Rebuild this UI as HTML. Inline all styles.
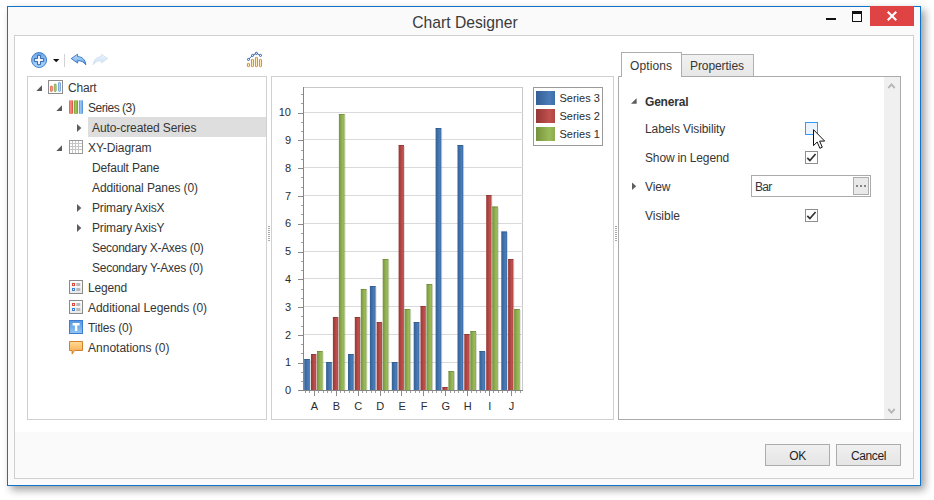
<!DOCTYPE html>
<html>
<head>
<meta charset="utf-8">
<title>Chart Designer</title>
<style>
html,body{margin:0;padding:0;}
body{width:934px;height:500px;background:#fff;position:relative;overflow:hidden;font-family:"Liberation Sans",sans-serif;font-size:12px;color:#333;}
.a{position:absolute;}
svg{position:absolute;overflow:visible;}
#win{position:absolute;left:7px;top:6px;width:912px;height:478px;border:1px solid #0f74c8;background:#fafafa;box-shadow:4px 4px 8px rgba(0,0,0,.38);}
#title{position:absolute;left:8px;top:13px;width:914px;text-align:center;font-size:15.7px;letter-spacing:0;line-height:20px;color:#3b3b3b;}
#frame{position:absolute;left:14px;top:35px;width:898px;height:442px;border:1px solid #d0d0d0;background:#fff;}
#footer{position:absolute;left:15px;top:432px;width:898px;height:46px;background:#fafafa;}
.btn{position:absolute;top:444px;width:63px;height:20px;border:1px solid #acacac;background:linear-gradient(#f0f0f0,#e5e5e5);text-align:center;line-height:22px;font-size:12px;color:#1e1e1e;}
.panel{position:absolute;border:1px solid #d0d0d0;background:#fff;}
.t{position:absolute;white-space:nowrap;color:#363636;font-size:12px;letter-spacing:-0.15px;line-height:20px;height:20px;}
.cb{position:absolute;width:11px;height:11px;border:1px solid #8e8e8e;background:#fff;}
.ct{font-family:"Liberation Sans",sans-serif;font-size:11px;fill:#2c2c2c;}
</style>
</head>
<body>
<div id="win"></div>
<div id="title">Chart Designer</div>
<div class="a" style="left:826px;top:18px;width:10px;height:2px;background:#111;"></div>
<div class="a" style="left:852px;top:11px;width:8px;height:7px;border:1px solid #111;border-top:3px solid #111;"></div>
<div class="a" style="left:870px;top:6px;width:44px;height:20px;background:#e04343;"></div>
<svg class="a" style="left:870px;top:6px" width="44" height="20"><path d="M17.7 5.7 L26.3 14.3 M26.3 5.7 L17.7 14.3" stroke="#fff" stroke-width="2.1" fill="none"/></svg>
<div id="frame"></div>
<div id="footer"></div>
<div class="btn" style="left:765px;letter-spacing:-0.5px;">OK</div>
<div class="btn" style="left:836px;letter-spacing:-0.4px;">Cancel</div>
<div class="panel" style="left:27px;top:76px;width:238px;height:342px;"></div>
<div class="panel" style="left:271px;top:76px;width:341px;height:342px;"></div>
<div class="panel" style="left:618px;top:76px;width:281px;height:342px;border-color:#ababab;"></div>
<svg style="left:0;top:0" width="934" height="500">
<defs>
<linearGradient id="gPlus" x1="0" y1="0" x2="0" y2="1"><stop offset="0" stop-color="#6aa4e6"/><stop offset="1" stop-color="#aed8f7"/></linearGradient>
<linearGradient id="gUndo" x1="0" y1="0" x2="0" y2="1"><stop offset="0" stop-color="#c0e0f8"/><stop offset=".55" stop-color="#8cc0ee"/><stop offset="1" stop-color="#3f7fd0"/></linearGradient>
<linearGradient id="gRedo" x1="0" y1="0" x2="0" y2="1"><stop offset="0" stop-color="#edf5fc"/><stop offset="1" stop-color="#c9def2"/></linearGradient>
<linearGradient id="gOr" x1="0" y1="0" x2="1" y2="0"><stop offset="0" stop-color="#d58a35"/><stop offset=".5" stop-color="#fff0c0"/><stop offset="1" stop-color="#d58a35"/></linearGradient>
<linearGradient id="gT" x1="0" y1="0" x2="0" y2="1"><stop offset="0" stop-color="#5596e2"/><stop offset="1" stop-color="#93c6f3"/></linearGradient>
<linearGradient id="gAn" x1="0" y1="0" x2="0" y2="1"><stop offset="0" stop-color="#ffdc96"/><stop offset="1" stop-color="#f6a445"/></linearGradient>
<linearGradient id="gLg" x1="0" y1="0" x2="0" y2="1"><stop offset="0" stop-color="#ffffff"/><stop offset="1" stop-color="#e9e9e9"/></linearGradient>
<linearGradient id="gR" x1="0" y1="0" x2="1" y2="0"><stop offset="0" stop-color="#d8483a"/><stop offset=".45" stop-color="#f59a8a"/><stop offset="1" stop-color="#d8483a"/></linearGradient>
<linearGradient id="gG" x1="0" y1="0" x2="1" y2="0"><stop offset="0" stop-color="#6f9a2a"/><stop offset=".45" stop-color="#a9cc62"/><stop offset="1" stop-color="#6f9a2a"/></linearGradient>
<linearGradient id="gB" x1="0" y1="0" x2="1" y2="0"><stop offset="0" stop-color="#4a8ad8"/><stop offset=".45" stop-color="#a6cdf4"/><stop offset="1" stop-color="#4a8ad8"/></linearGradient>
<linearGradient id="bB" x1="0" y1="0" x2="1" y2="0"><stop offset="0" stop-color="#335f94"/><stop offset=".7" stop-color="#4a7cb8"/><stop offset="1" stop-color="#3f6fa8"/></linearGradient>
<linearGradient id="bR" x1="0" y1="0" x2="1" y2="0"><stop offset="0" stop-color="#953735"/><stop offset=".7" stop-color="#c0504d"/><stop offset="1" stop-color="#b04845"/></linearGradient>
<linearGradient id="bG" x1="0" y1="0" x2="1" y2="0"><stop offset="0" stop-color="#76923c"/><stop offset=".7" stop-color="#9bbb59"/><stop offset="1" stop-color="#8cac4e"/></linearGradient>
</defs>

<circle cx="39.1" cy="60" r="7.5" fill="url(#gPlus)" stroke="#4482d2" stroke-width="1"/>
<path d="M37.6 55.3 h2.8 v3.3 h3.3 v2.8 h-3.3 v3.3 h-2.8 v-3.3 h-3.3 v-2.8 h3.3 z" fill="#fff" stroke="#2b61ae" stroke-width="1"/>
<path d="M53 59 h6.4 l-3.2 3.3 z" fill="#111"/>
<rect x="64" y="54" width="1" height="13" fill="#d2d2d2"/>
<path transform="translate(71.2,54.2)" d="M0 4.4 L6.4 0 L6.4 2.4 C10.8 2.4 14.3 5.5 14.6 10.6 C12.8 7.8 10.2 6.5 6.4 6.5 L6.4 8.9 Z" fill="url(#gUndo)" stroke="#3673c6" stroke-width=".9" stroke-linejoin="round"/>
<path transform="translate(107.8,54.2) scale(-1,1)" d="M0 4.4 L6.4 0 L6.4 2.4 C10.8 2.4 14.3 5.5 14.6 10.6 C12.8 7.8 10.2 6.5 6.4 6.5 L6.4 8.9 Z" fill="url(#gRedo)" stroke="#cfe2f4" stroke-width=".8" stroke-linejoin="round"/>
<rect x="247.4" y="63.35" width="2.1" height="3.3" rx=".7" fill="url(#gOr)" stroke="#c87a2a" stroke-width=".7"/>
<rect x="251.4" y="59.35" width="2.1" height="7.3" rx=".7" fill="url(#gOr)" stroke="#c87a2a" stroke-width=".7"/>
<rect x="255.4" y="57.35" width="2.1" height="9.3" rx=".7" fill="url(#gOr)" stroke="#c87a2a" stroke-width=".7"/>
<rect x="259.4" y="59.35" width="2.1" height="7.3" rx=".7" fill="url(#gOr)" stroke="#c87a2a" stroke-width=".7"/>
<polyline points="248.5,59.4 252.6,55.4 256.4,53.3 260.5,55.4" fill="none" stroke="#2c5fa8" stroke-width=".9"/>
<circle cx="248.5" cy="59.4" r="1.05" fill="#fff" stroke="#1f58ac" stroke-width=".95"/>
<circle cx="252.6" cy="55.4" r="1.05" fill="#fff" stroke="#1f58ac" stroke-width=".95"/>
<circle cx="256.4" cy="53.3" r="1.05" fill="#fff" stroke="#1f58ac" stroke-width=".95"/>
<circle cx="260.5" cy="55.4" r="1.05" fill="#fff" stroke="#1f58ac" stroke-width=".95"/>
<path d="M42 85.3 L42 91 L36.3 91 Z" fill="#5a5a5a"/>
<path d="M62 105.3 L62 111 L56.3 111 Z" fill="#5a5a5a"/>
<path d="M62 145.3 L62 151 L56.3 151 Z" fill="#5a5a5a"/>
<path d="M77 124.1 L81.3 128.1 L77 132.1 Z" fill="#5e5e5e"/>
<path d="M77 204.1 L81.3 208.1 L77 212.1 Z" fill="#5e5e5e"/>
<path d="M77 224.1 L81.3 228.1 L77 232.1 Z" fill="#5e5e5e"/>
<rect x="48.5" y="80.5" width="14" height="13" fill="#fff" stroke="#8c8c8c"/>
<rect x="50.45" y="86.1" width="1.9" height="5.3" rx=".6" fill="#f6a292" stroke="#d8483a" stroke-width=".7"/>
<rect x="54.25" y="84.1" width="1.9" height="7.3" rx=".6" fill="#b4d670" stroke="#6c9a28" stroke-width=".7"/>
<rect x="58.55" y="82.4" width="1.9" height="9" rx=".6" fill="#b8daf8" stroke="#4a88d8" stroke-width=".7"/>
<rect x="69.1" y="100.2" width="3.9" height="13.7" rx=".8" fill="url(#gR)"/>
<rect x="73.9" y="100.2" width="4.1" height="13.7" rx=".8" fill="url(#gG)"/>
<rect x="78.9" y="100.2" width="4.1" height="13.7" rx=".8" fill="url(#gB)"/>
<rect x="69.5" y="140.5" width="13" height="13" fill="#fff" stroke="#9a9a9a"/>
<rect x="72" y="141" width="1" height="12" fill="#c6c6c6"/>
<rect x="70" y="143" width="12" height="1" fill="#c6c6c6"/>
<rect x="75" y="141" width="1" height="12" fill="#c6c6c6"/>
<rect x="70" y="146" width="12" height="1" fill="#c6c6c6"/>
<rect x="78" y="141" width="1" height="12" fill="#c6c6c6"/>
<rect x="70" y="149" width="12" height="1" fill="#c6c6c6"/>
<rect x="69.5" y="280.5" width="13" height="13" fill="url(#gLg)" stroke="#8a8a8a"/>
<rect x="72" y="283" width="3" height="3" fill="#d94a3c"/><rect x="73" y="284" width="1" height="1" fill="#fff"/>
<rect x="76.3" y="283" width="4" height="3" fill="#b9b9b9"/>
<rect x="72" y="288" width="3" height="3" fill="#3f7fd2"/><rect x="73" y="289" width="1" height="1" fill="#fff"/>
<rect x="76.3" y="288" width="4" height="3" fill="#b9b9b9"/>
<rect x="69.5" y="300.5" width="13" height="13" fill="url(#gLg)" stroke="#8a8a8a"/>
<rect x="72" y="303" width="3" height="3" fill="#d94a3c"/><rect x="73" y="304" width="1" height="1" fill="#fff"/>
<rect x="76.3" y="303" width="4" height="3" fill="#b9b9b9"/>
<rect x="72" y="308" width="3" height="3" fill="#3f7fd2"/><rect x="73" y="309" width="1" height="1" fill="#fff"/>
<rect x="76.3" y="308" width="4" height="3" fill="#b9b9b9"/>
<rect x="69.5" y="320.5" width="13" height="13" fill="url(#gT)" stroke="#3b7bd0"/>
<path d="M72.6 323.1 h7 v2.3 h-2.35 v5.5 h-2.3 v-5.5 h-2.35 z" fill="#fff"/>
<path d="M69.5 341.5 h13 v9 h-8 l-2.4 3.6 v-3.6 h-2.6 z" fill="url(#gAn)" stroke="#d2812f" stroke-linejoin="round"/>
</svg>
<div class="a" style="left:88px;top:117px;width:178px;height:20px;background:#dedede;"></div>
<div class="t" style="left:68px;top:78px;letter-spacing:-0.18px;">Chart</div>
<div class="t" style="left:88px;top:98px;letter-spacing:-0.47px;">Series (3)</div>
<div class="t" style="left:92px;top:118px;letter-spacing:-0.09px;">Auto-created Series</div>
<div class="t" style="left:88px;top:138px;letter-spacing:-0.08px;">XY-Diagram</div>
<div class="t" style="left:92px;top:158px;letter-spacing:-0.18px;">Default Pane</div>
<div class="t" style="left:92px;top:178px;letter-spacing:-0.105px;">Additional Panes (0)</div>
<div class="t" style="left:92px;top:198px;letter-spacing:-0.185px;">Primary AxisX</div>
<div class="t" style="left:92px;top:218px;letter-spacing:-0.185px;">Primary AxisY</div>
<div class="t" style="left:92px;top:238px;letter-spacing:-0.295px;">Secondary X-Axes (0)</div>
<div class="t" style="left:92px;top:258px;letter-spacing:-0.26px;">Secondary Y-Axes (0)</div>
<div class="t" style="left:88px;top:278px;letter-spacing:-0.17px;">Legend</div>
<div class="t" style="left:88px;top:298px;letter-spacing:-0.05px;">Additional Legends (0)</div>
<div class="t" style="left:88px;top:318px;letter-spacing:-0.2px;">Titles (0)</div>
<div class="t" style="left:88px;top:338px;letter-spacing:0.01px;">Annotations (0)</div>
<svg style="left:0;top:0" width="934" height="500">
<rect x="303.5" y="87.5" width="219" height="303" fill="#fff" stroke="#c9c9c9"/>
<rect x="304" y="362" width="219" height="1" fill="#dadada"/>
<rect x="304" y="334" width="219" height="1" fill="#dadada"/>
<rect x="304" y="306" width="219" height="1" fill="#dadada"/>
<rect x="304" y="278" width="219" height="1" fill="#dadada"/>
<rect x="304" y="251" width="219" height="1" fill="#dadada"/>
<rect x="304" y="223" width="219" height="1" fill="#dadada"/>
<rect x="304" y="195" width="219" height="1" fill="#dadada"/>
<rect x="304" y="167" width="219" height="1" fill="#dadada"/>
<rect x="304" y="139" width="219" height="1" fill="#dadada"/>
<rect x="304" y="112" width="219" height="1" fill="#dadada"/>
<rect x="309.8" y="360" width="1" height="30" fill="#000" opacity=".15"/>
<rect x="304.2" y="359" width="5.7" height="31" fill="url(#bB)"/>
<rect x="304.2" y="359" width="5.7" height="1" fill="#2c5586" opacity=".6"/>
<rect x="316.2" y="355" width="1" height="35" fill="#000" opacity=".15"/>
<rect x="311" y="354" width="5.3" height="36" fill="url(#bR)"/>
<rect x="311" y="354" width="5.3" height="1" fill="#8a302e" opacity=".6"/>
<rect x="322.6" y="352" width="1" height="38" fill="#000" opacity=".15"/>
<rect x="317" y="351" width="5.7" height="39" fill="url(#bG)"/>
<rect x="317" y="351" width="5.7" height="1" fill="#6a8434" opacity=".6"/>
<rect x="331.7" y="363" width="1" height="27" fill="#000" opacity=".15"/>
<rect x="326.1" y="362" width="5.7" height="28" fill="url(#bB)"/>
<rect x="326.1" y="362" width="5.7" height="1" fill="#2c5586" opacity=".6"/>
<rect x="338.1" y="318" width="1" height="72" fill="#000" opacity=".15"/>
<rect x="332.9" y="317" width="5.3" height="73" fill="url(#bR)"/>
<rect x="332.9" y="317" width="5.3" height="1" fill="#8a302e" opacity=".6"/>
<rect x="344.5" y="115" width="1" height="275" fill="#000" opacity=".15"/>
<rect x="338.9" y="114" width="5.7" height="276" fill="url(#bG)"/>
<rect x="338.9" y="114" width="5.7" height="1" fill="#6a8434" opacity=".6"/>
<rect x="353.6" y="355" width="1" height="35" fill="#000" opacity=".15"/>
<rect x="348" y="354" width="5.7" height="36" fill="url(#bB)"/>
<rect x="348" y="354" width="5.7" height="1" fill="#2c5586" opacity=".6"/>
<rect x="360" y="318" width="1" height="72" fill="#000" opacity=".15"/>
<rect x="354.8" y="317" width="5.3" height="73" fill="url(#bR)"/>
<rect x="354.8" y="317" width="5.3" height="1" fill="#8a302e" opacity=".6"/>
<rect x="366.4" y="290" width="1" height="100" fill="#000" opacity=".15"/>
<rect x="360.8" y="289" width="5.7" height="101" fill="url(#bG)"/>
<rect x="360.8" y="289" width="5.7" height="1" fill="#6a8434" opacity=".6"/>
<rect x="375.5" y="287" width="1" height="103" fill="#000" opacity=".15"/>
<rect x="369.9" y="286" width="5.7" height="104" fill="url(#bB)"/>
<rect x="369.9" y="286" width="5.7" height="1" fill="#2c5586" opacity=".6"/>
<rect x="381.9" y="323" width="1" height="67" fill="#000" opacity=".15"/>
<rect x="376.7" y="322" width="5.3" height="68" fill="url(#bR)"/>
<rect x="376.7" y="322" width="5.3" height="1" fill="#8a302e" opacity=".6"/>
<rect x="388.3" y="260" width="1" height="130" fill="#000" opacity=".15"/>
<rect x="382.7" y="259" width="5.7" height="131" fill="url(#bG)"/>
<rect x="382.7" y="259" width="5.7" height="1" fill="#6a8434" opacity=".6"/>
<rect x="397.4" y="363" width="1" height="27" fill="#000" opacity=".15"/>
<rect x="391.8" y="362" width="5.7" height="28" fill="url(#bB)"/>
<rect x="391.8" y="362" width="5.7" height="1" fill="#2c5586" opacity=".6"/>
<rect x="403.8" y="146" width="1" height="244" fill="#000" opacity=".15"/>
<rect x="398.6" y="145" width="5.3" height="245" fill="url(#bR)"/>
<rect x="398.6" y="145" width="5.3" height="1" fill="#8a302e" opacity=".6"/>
<rect x="410.2" y="310" width="1" height="80" fill="#000" opacity=".15"/>
<rect x="404.6" y="309" width="5.7" height="81" fill="url(#bG)"/>
<rect x="404.6" y="309" width="5.7" height="1" fill="#6a8434" opacity=".6"/>
<rect x="419.3" y="323" width="1" height="67" fill="#000" opacity=".15"/>
<rect x="413.7" y="322" width="5.7" height="68" fill="url(#bB)"/>
<rect x="413.7" y="322" width="5.7" height="1" fill="#2c5586" opacity=".6"/>
<rect x="425.7" y="307" width="1" height="83" fill="#000" opacity=".15"/>
<rect x="420.5" y="306" width="5.3" height="84" fill="url(#bR)"/>
<rect x="420.5" y="306" width="5.3" height="1" fill="#8a302e" opacity=".6"/>
<rect x="432.1" y="285" width="1" height="105" fill="#000" opacity=".15"/>
<rect x="426.5" y="284" width="5.7" height="106" fill="url(#bG)"/>
<rect x="426.5" y="284" width="5.7" height="1" fill="#6a8434" opacity=".6"/>
<rect x="441.2" y="129" width="1" height="261" fill="#000" opacity=".15"/>
<rect x="435.6" y="128" width="5.7" height="262" fill="url(#bB)"/>
<rect x="435.6" y="128" width="5.7" height="1" fill="#2c5586" opacity=".6"/>
<rect x="447.6" y="388" width="1" height="2" fill="#000" opacity=".15"/>
<rect x="442.4" y="387" width="5.3" height="3" fill="url(#bR)"/>
<rect x="442.4" y="387" width="5.3" height="1" fill="#8a302e" opacity=".6"/>
<rect x="454" y="372" width="1" height="18" fill="#000" opacity=".15"/>
<rect x="448.4" y="371" width="5.7" height="19" fill="url(#bG)"/>
<rect x="448.4" y="371" width="5.7" height="1" fill="#6a8434" opacity=".6"/>
<rect x="463.1" y="146" width="1" height="244" fill="#000" opacity=".15"/>
<rect x="457.5" y="145" width="5.7" height="245" fill="url(#bB)"/>
<rect x="457.5" y="145" width="5.7" height="1" fill="#2c5586" opacity=".6"/>
<rect x="469.5" y="335" width="1" height="55" fill="#000" opacity=".15"/>
<rect x="464.3" y="334" width="5.3" height="56" fill="url(#bR)"/>
<rect x="464.3" y="334" width="5.3" height="1" fill="#8a302e" opacity=".6"/>
<rect x="475.9" y="332" width="1" height="58" fill="#000" opacity=".15"/>
<rect x="470.3" y="331" width="5.7" height="59" fill="url(#bG)"/>
<rect x="470.3" y="331" width="5.7" height="1" fill="#6a8434" opacity=".6"/>
<rect x="485" y="352" width="1" height="38" fill="#000" opacity=".15"/>
<rect x="479.4" y="351" width="5.7" height="39" fill="url(#bB)"/>
<rect x="479.4" y="351" width="5.7" height="1" fill="#2c5586" opacity=".6"/>
<rect x="491.4" y="196" width="1" height="194" fill="#000" opacity=".15"/>
<rect x="486.2" y="195" width="5.3" height="195" fill="url(#bR)"/>
<rect x="486.2" y="195" width="5.3" height="1" fill="#8a302e" opacity=".6"/>
<rect x="497.8" y="207.5" width="1" height="182.5" fill="#000" opacity=".15"/>
<rect x="492.2" y="206.5" width="5.7" height="183.5" fill="url(#bG)"/>
<rect x="492.2" y="206.5" width="5.7" height="1" fill="#6a8434" opacity=".6"/>
<rect x="506.9" y="232.5" width="1" height="157.5" fill="#000" opacity=".15"/>
<rect x="501.3" y="231.5" width="5.7" height="158.5" fill="url(#bB)"/>
<rect x="501.3" y="231.5" width="5.7" height="1" fill="#2c5586" opacity=".6"/>
<rect x="513.3" y="260" width="1" height="130" fill="#000" opacity=".15"/>
<rect x="508.1" y="259" width="5.3" height="131" fill="url(#bR)"/>
<rect x="508.1" y="259" width="5.3" height="1" fill="#8a302e" opacity=".6"/>
<rect x="519.7" y="310" width="1" height="80" fill="#000" opacity=".15"/>
<rect x="514.1" y="309" width="5.7" height="81" fill="url(#bG)"/>
<rect x="514.1" y="309" width="5.7" height="1" fill="#6a8434" opacity=".6"/>
<rect x="303" y="87" width="1" height="304" fill="#858585"/>
<rect x="298" y="390" width="225" height="1" fill="#858585"/>
<text class="ct" x="291" y="394" text-anchor="end">0</text>
<rect x="298" y="363" width="5" height="1" fill="#8a8a8a"/>
<text class="ct" x="291" y="366" text-anchor="end">1</text>
<rect x="298" y="335" width="5" height="1" fill="#8a8a8a"/>
<text class="ct" x="291" y="339" text-anchor="end">2</text>
<rect x="298" y="307" width="5" height="1" fill="#8a8a8a"/>
<text class="ct" x="291" y="311" text-anchor="end">3</text>
<rect x="298" y="279" width="5" height="1" fill="#8a8a8a"/>
<text class="ct" x="291" y="283" text-anchor="end">4</text>
<rect x="298" y="252" width="5" height="1" fill="#8a8a8a"/>
<text class="ct" x="291" y="255" text-anchor="end">5</text>
<rect x="298" y="224" width="5" height="1" fill="#8a8a8a"/>
<text class="ct" x="291" y="227" text-anchor="end">6</text>
<rect x="298" y="196" width="5" height="1" fill="#8a8a8a"/>
<text class="ct" x="291" y="200" text-anchor="end">7</text>
<rect x="298" y="168" width="5" height="1" fill="#8a8a8a"/>
<text class="ct" x="291" y="172" text-anchor="end">8</text>
<rect x="298" y="140" width="5" height="1" fill="#8a8a8a"/>
<text class="ct" x="291" y="144" text-anchor="end">9</text>
<rect x="298" y="113" width="5" height="1" fill="#8a8a8a"/>
<text class="ct" x="291" y="116" text-anchor="end">10</text>
<rect x="301" y="381" width="2" height="1" fill="#a0a0a0"/>
<rect x="301" y="372" width="2" height="1" fill="#a0a0a0"/>
<rect x="301" y="353" width="2" height="1" fill="#a0a0a0"/>
<rect x="301" y="344" width="2" height="1" fill="#a0a0a0"/>
<rect x="301" y="326" width="2" height="1" fill="#a0a0a0"/>
<rect x="301" y="316" width="2" height="1" fill="#a0a0a0"/>
<rect x="301" y="298" width="2" height="1" fill="#a0a0a0"/>
<rect x="301" y="289" width="2" height="1" fill="#a0a0a0"/>
<rect x="301" y="270" width="2" height="1" fill="#a0a0a0"/>
<rect x="301" y="261" width="2" height="1" fill="#a0a0a0"/>
<rect x="301" y="242" width="2" height="1" fill="#a0a0a0"/>
<rect x="301" y="233" width="2" height="1" fill="#a0a0a0"/>
<rect x="301" y="214" width="2" height="1" fill="#a0a0a0"/>
<rect x="301" y="205" width="2" height="1" fill="#a0a0a0"/>
<rect x="301" y="187" width="2" height="1" fill="#a0a0a0"/>
<rect x="301" y="177" width="2" height="1" fill="#a0a0a0"/>
<rect x="301" y="159" width="2" height="1" fill="#a0a0a0"/>
<rect x="301" y="150" width="2" height="1" fill="#a0a0a0"/>
<rect x="301" y="131" width="2" height="1" fill="#a0a0a0"/>
<rect x="301" y="122" width="2" height="1" fill="#a0a0a0"/>
<rect x="301" y="103" width="2" height="1" fill="#a0a0a0"/>
<rect x="301" y="94" width="2" height="1" fill="#a0a0a0"/>
<rect x="314" y="391" width="1" height="5" fill="#8c8c8c"/>
<text class="ct" x="314.5" y="410" text-anchor="middle">A</text>
<rect x="336" y="391" width="1" height="5" fill="#8c8c8c"/>
<text class="ct" x="336.4" y="410" text-anchor="middle">B</text>
<rect x="358" y="391" width="1" height="5" fill="#8c8c8c"/>
<text class="ct" x="358.3" y="410" text-anchor="middle">C</text>
<rect x="380" y="391" width="1" height="5" fill="#8c8c8c"/>
<text class="ct" x="380.2" y="410" text-anchor="middle">D</text>
<rect x="401" y="391" width="1" height="5" fill="#8c8c8c"/>
<text class="ct" x="402.1" y="410" text-anchor="middle">E</text>
<rect x="423" y="391" width="1" height="5" fill="#8c8c8c"/>
<text class="ct" x="424" y="410" text-anchor="middle">F</text>
<rect x="445" y="391" width="1" height="5" fill="#8c8c8c"/>
<text class="ct" x="445.9" y="410" text-anchor="middle">G</text>
<rect x="467" y="391" width="1" height="5" fill="#8c8c8c"/>
<text class="ct" x="467.8" y="410" text-anchor="middle">H</text>
<rect x="489" y="391" width="1" height="5" fill="#8c8c8c"/>
<text class="ct" x="489.7" y="410" text-anchor="middle">I</text>
<rect x="511" y="391" width="1" height="5" fill="#8c8c8c"/>
<text class="ct" x="511.6" y="410" text-anchor="middle">J</text>
<rect x="305" y="391" width="1" height="2" fill="#a0a0a0"/>
<rect x="309" y="391" width="1" height="2" fill="#a0a0a0"/>
<rect x="318" y="391" width="1" height="2" fill="#a0a0a0"/>
<rect x="323" y="391" width="1" height="2" fill="#a0a0a0"/>
<rect x="327" y="391" width="1" height="2" fill="#a0a0a0"/>
<rect x="331" y="391" width="1" height="2" fill="#a0a0a0"/>
<rect x="340" y="391" width="1" height="2" fill="#a0a0a0"/>
<rect x="344" y="391" width="1" height="2" fill="#a0a0a0"/>
<rect x="349" y="391" width="1" height="2" fill="#a0a0a0"/>
<rect x="353" y="391" width="1" height="2" fill="#a0a0a0"/>
<rect x="362" y="391" width="1" height="2" fill="#a0a0a0"/>
<rect x="366" y="391" width="1" height="2" fill="#a0a0a0"/>
<rect x="371" y="391" width="1" height="2" fill="#a0a0a0"/>
<rect x="375" y="391" width="1" height="2" fill="#a0a0a0"/>
<rect x="384" y="391" width="1" height="2" fill="#a0a0a0"/>
<rect x="388" y="391" width="1" height="2" fill="#a0a0a0"/>
<rect x="393" y="391" width="1" height="2" fill="#a0a0a0"/>
<rect x="397" y="391" width="1" height="2" fill="#a0a0a0"/>
<rect x="406" y="391" width="1" height="2" fill="#a0a0a0"/>
<rect x="410" y="391" width="1" height="2" fill="#a0a0a0"/>
<rect x="415" y="391" width="1" height="2" fill="#a0a0a0"/>
<rect x="419" y="391" width="1" height="2" fill="#a0a0a0"/>
<rect x="428" y="391" width="1" height="2" fill="#a0a0a0"/>
<rect x="432" y="391" width="1" height="2" fill="#a0a0a0"/>
<rect x="436" y="391" width="1" height="2" fill="#a0a0a0"/>
<rect x="441" y="391" width="1" height="2" fill="#a0a0a0"/>
<rect x="450" y="391" width="1" height="2" fill="#a0a0a0"/>
<rect x="454" y="391" width="1" height="2" fill="#a0a0a0"/>
<rect x="458" y="391" width="1" height="2" fill="#a0a0a0"/>
<rect x="463" y="391" width="1" height="2" fill="#a0a0a0"/>
<rect x="471" y="391" width="1" height="2" fill="#a0a0a0"/>
<rect x="476" y="391" width="1" height="2" fill="#a0a0a0"/>
<rect x="480" y="391" width="1" height="2" fill="#a0a0a0"/>
<rect x="485" y="391" width="1" height="2" fill="#a0a0a0"/>
<rect x="493" y="391" width="1" height="2" fill="#a0a0a0"/>
<rect x="498" y="391" width="1" height="2" fill="#a0a0a0"/>
<rect x="502" y="391" width="1" height="2" fill="#a0a0a0"/>
<rect x="507" y="391" width="1" height="2" fill="#a0a0a0"/>
<rect x="515" y="391" width="1" height="2" fill="#a0a0a0"/>
<rect x="520" y="391" width="1" height="2" fill="#a0a0a0"/>
<rect x="533.5" y="87.5" width="69" height="58" fill="#fff" stroke="#9a9a9a"/>
<rect x="536" y="91" width="19" height="14" fill="url(#bB)"/>
<text class="ct" x="559.5" y="102">Series 3</text>
<rect x="536" y="109" width="19" height="14" fill="url(#bR)"/>
<text class="ct" x="559.5" y="120">Series 2</text>
<rect x="536" y="127" width="19" height="14" fill="url(#bG)"/>
<text class="ct" x="559.5" y="138">Series 1</text>
</svg>
<div class="a" style="left:268px;top:226px;width:2px;height:1px;background:#a9a9a9;"></div>
<div class="a" style="left:268px;top:228px;width:2px;height:1px;background:#a9a9a9;"></div>
<div class="a" style="left:268px;top:230px;width:2px;height:1px;background:#a9a9a9;"></div>
<div class="a" style="left:268px;top:232px;width:2px;height:1px;background:#a9a9a9;"></div>
<div class="a" style="left:268px;top:234px;width:2px;height:1px;background:#a9a9a9;"></div>
<div class="a" style="left:268px;top:236px;width:2px;height:1px;background:#a9a9a9;"></div>
<div class="a" style="left:268px;top:238px;width:2px;height:1px;background:#a9a9a9;"></div>
<div class="a" style="left:268px;top:240px;width:2px;height:1px;background:#a9a9a9;"></div>
<div class="a" style="left:615px;top:226px;width:2px;height:1px;background:#a9a9a9;"></div>
<div class="a" style="left:615px;top:228px;width:2px;height:1px;background:#a9a9a9;"></div>
<div class="a" style="left:615px;top:230px;width:2px;height:1px;background:#a9a9a9;"></div>
<div class="a" style="left:615px;top:232px;width:2px;height:1px;background:#a9a9a9;"></div>
<div class="a" style="left:615px;top:234px;width:2px;height:1px;background:#a9a9a9;"></div>
<div class="a" style="left:615px;top:236px;width:2px;height:1px;background:#a9a9a9;"></div>
<div class="a" style="left:615px;top:238px;width:2px;height:1px;background:#a9a9a9;"></div>
<div class="a" style="left:615px;top:240px;width:2px;height:1px;background:#a9a9a9;"></div>
<div class="a" style="left:681px;top:54px;width:73px;height:22px;border:1px solid #b0b0b0;border-left:none;border-bottom:none;box-sizing:border-box;background:linear-gradient(#f1f1f1,#e7e7e7);"></div>
<div class="a" style="left:621px;top:52px;width:61px;height:25px;border:1px solid #adadad;border-bottom:none;box-sizing:border-box;background:#fff;"></div>
<div class="t" style="left:630px;top:56px;letter-spacing:.12px;">Options</div>
<div class="t" style="left:690px;top:56px;letter-spacing:-.08px;">Properties</div>
<div class="a" style="left:884px;top:77px;width:16px;height:342px;background:#f0f0f0;"></div>
<svg style="left:0;top:0" width="934" height="500">
<path d="M888.3 88 L891.5 84.4 L894.7 88" fill="none" stroke="#b7b7b7" stroke-width="1.9"/>
<path d="M888.3 409 L891.5 412.6 L894.7 409" fill="none" stroke="#b7b7b7" stroke-width="1.9"/>
<path d="M636.6 98.3 L636.6 103.8 L631 103.8 Z" fill="#5a5a5a"/>
<path d="M632 182.5 L636.2 186.3 L632 190 Z" fill="#5e5e5e"/>
</svg>
<div class="t" style="left:645px;top:92px;font-weight:bold;letter-spacing:-0.2px;color:#333;">General</div>
<div class="t" style="left:645px;top:119px;letter-spacing:-0.095px;">Labels Visibility</div>
<div class="t" style="left:645px;top:148px;letter-spacing:-0.15px;">Show in Legend</div>
<div class="t" style="left:645px;top:177px;letter-spacing:-0.15px;">View</div>
<div class="t" style="left:645px;top:206px;letter-spacing:-0.03px;">Visible</div>
<div class="cb" style="left:805px;top:122px;border-color:#3399ff;background:#ebf4fd;"></div>
<div class="cb" style="left:805px;top:151px;"></div>
<div class="cb" style="left:805px;top:209px;"></div>
<div class="a" style="left:751px;top:175px;width:118px;height:20px;border:1px solid #ababab;background:#fff;"></div>
<div class="t" style="left:755px;top:177px;letter-spacing:-.7px;">Bar</div>
<div class="a" style="left:853px;top:177px;width:14px;height:16px;border:1px solid #adadad;background:#e9e9e9;"></div>
<div class="a" style="left:856.3px;top:185px;width:2px;height:2px;background:#858585;"></div>
<div class="a" style="left:860px;top:185px;width:2px;height:2px;background:#858585;"></div>
<div class="a" style="left:863.7px;top:185px;width:2px;height:2px;background:#858585;"></div>
<svg style="left:0;top:0" width="934" height="500">
<path d="M807.3 157.8 L809.9 160.6 L815.6 154" fill="none" stroke="#333" stroke-width="1.7"/>
<path d="M807.3 215.8 L809.9 218.6 L815.6 212" fill="none" stroke="#333" stroke-width="1.7"/>
</svg>
<svg style="left:813px;top:129px" width="14" height="22"><path d="M0.5 0.7 L0.5 16.6 L4.2 13 L6.9 19.3 L9.3 18.2 L6.6 12.1 L11.7 12.1 Z" fill="#fff" stroke="#111" stroke-width="1" stroke-linejoin="miter"/></svg>
</body>
</html>
